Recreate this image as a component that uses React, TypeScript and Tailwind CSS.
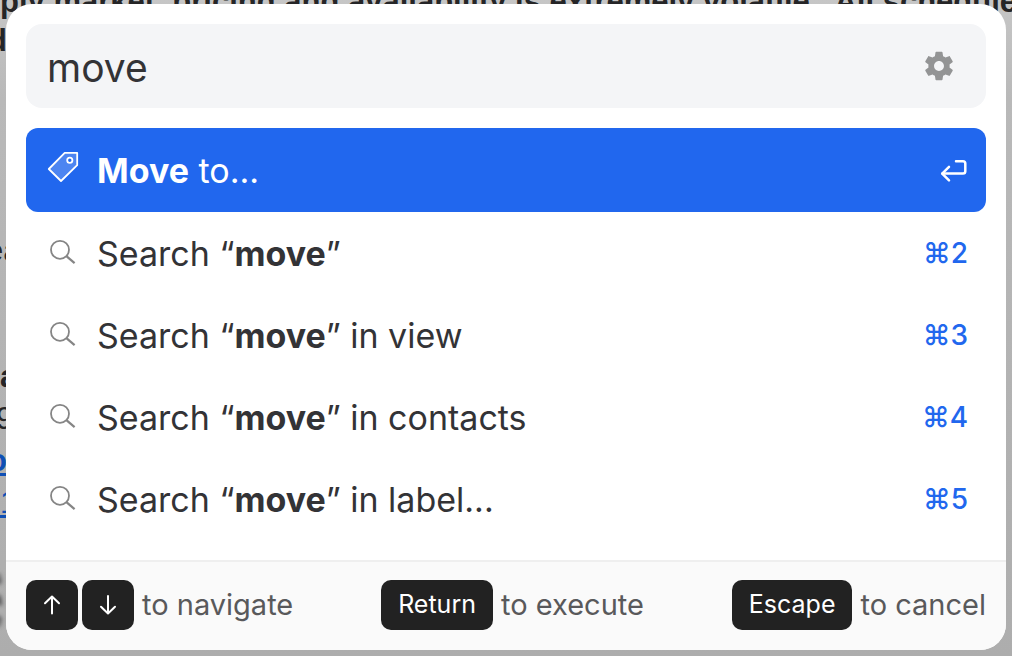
import { useState } from "react";

const FONT = "font-['Inter','Noto_Sans',sans-serif]";

const results = [
  { scope: "", key: "2" },
  { scope: " in view", key: "3" },
  { scope: " in contacts", key: "4" },
  { scope: " in label...", key: "5" },
];

function GearIcon() {
  return (
    <svg viewBox="0 0 24 24" className="size-[34px]" fill="currentColor" aria-hidden="true">
      <path d="M19.43 12.98c.04-.32.07-.64.07-.98s-.03-.66-.07-.98l2.11-1.65c.19-.15.24-.42.12-.64l-2-3.46c-.12-.22-.39-.3-.61-.22l-2.49 1c-.52-.4-1.08-.73-1.69-.98l-.38-2.65C14.46 2.18 14.25 2 14 2h-4c-.25 0-.46.18-.49.42l-.38 2.65c-.61.25-1.17.59-1.69.98l-2.49-1c-.23-.09-.49 0-.61.22l-2 3.46c-.13.22-.07.49.12.64l2.11 1.65c-.04.32-.07.65-.07.98s.03.66.07.98l-2.11 1.65c-.19.15-.24.42-.12.64l2 3.46c.12.22.39.3.61.22l2.49-1c.52.4 1.08.73 1.69.98l.38 2.65c.03.24.24.42.49.42h4c.25 0 .46-.18.49-.42l.38-2.65c.61-.25 1.17-.59 1.69-.98l2.49 1c.23.09.49 0 .61-.22l2-3.46c.12-.22.07-.49-.12-.64l-2.11-1.65zM12 15.5c-1.93 0-3.5-1.57-3.5-3.5s1.57-3.5 3.5-3.5 3.5 1.57 3.5 3.5-1.57 3.5-3.5 3.5z" />
    </svg>
  );
}

function TagIcon() {
  return (
    <svg viewBox="0 0 32 32" className="mb-1.5 size-8 shrink-0" fill="none" stroke="currentColor" aria-hidden="true">
      <path
        d="M17.7 1.9 H30.2 V14.2 L14 30 L1.8 18 Z"
        fill="#ffffff"
        fillOpacity="0.2"
        strokeWidth="1.8"
        strokeLinejoin="round"
      />
      <circle cx="22.8" cy="9.2" r="2.6" fill="#2167ee" strokeWidth="1.8" />
    </svg>
  );
}

function SearchIcon() {
  return (
    <svg viewBox="0 0 32 32" className="size-8 shrink-0 text-[#858585]" fill="none" stroke="currentColor" aria-hidden="true">
      <circle cx="13" cy="12.8" r="9" strokeWidth="1.8" />
      <path d="M19.4 19.2 L27.6 26.2" strokeWidth="2.2" />
    </svg>
  );
}

function ReturnIcon() {
  return (
    <svg
      viewBox="0 0 28 28"
      className="size-7"
      fill="none"
      stroke="currentColor"
      strokeWidth="2.5"
      strokeLinecap="round"
      strokeLinejoin="round"
      aria-hidden="true"
    >
      <path d="M16 5.2 H23 Q25.3 5.2 25.3 7.5 V15.3 Q25.3 17.6 23 17.6 H2.5" />
      <path d="M9 10.8 L2.2 17.6 L9 24.4" />
    </svg>
  );
}

function ArrowIcon({ down = false }: { down?: boolean }) {
  return (
    <svg
      viewBox="1 0 18 24"
      className="h-6 w-[18px]"
      fill="none"
      stroke="currentColor"
      strokeWidth="2"
      strokeLinecap="round"
      strokeLinejoin="round"
      aria-hidden="true"
    >
      <path d={down ? "M10 3 V20 M3 13.8 L10 20.5 L17 13.8" : "M10 20.5 V4 M3 10.2 L10 3.5 L17 10.2"} />
    </svg>
  );
}

function Key({ children }: { children: React.ReactNode }) {
  return (
    <kbd className={`${FONT} flex h-[50px] items-center justify-center rounded-[10px] bg-[#222222] px-[17px] text-[25px] text-white`}>
      {children}
    </kbd>
  );
}

function Backdrop() {
  return (
    <div
      className="absolute inset-0 overflow-hidden whitespace-pre bg-linear-to-b from-[#c6c6c6] via-[#b9b9b9] via-15% to-[#adadad] font-['Liberation_Sans',Arial,sans-serif] text-[31px] leading-[42px] text-[#252527]"
      aria-hidden="true"
    >
      <p className="-mt-4 leading-9 font-bold">ply market, pricing and availability is extremely volatile.  All schedule</p>
      <p className="-ml-3 font-bold">d</p>
      <p className="-ml-3.5 mt-[168px]">ea</p>
      <p className="mt-[84px] font-bold">a</p>
      <p className="-ml-1">9</p>
      <p className="-ml-3 font-bold text-[#0f4fb5] underline">o</p>
      <p className="text-[#0f4fb5] underline">1</p>
      <div className="-ml-2 mt-11 text-[18px] leading-[21px] font-bold blur-[2px]">
        <p>s</p>
        <p>a</p>
        <p>e</p>
      </div>
    </div>
  );
}

export default function App() {
  const [query, setQuery] = useState("move");

  return (
    <main className={`${FONT} relative min-h-screen px-1.5 pt-1 pb-1.5`}>
      <Backdrop />
      <section className="relative overflow-hidden rounded-[26px] bg-white text-[#333336]">
        <div className="p-5">
          <div className="flex h-21 items-center rounded-2xl bg-[#f4f5f7] pr-[30px] pl-[21px]">
            <input
              type="text"
              aria-label="Command"
              value={query}
              onChange={(e) => setQuery(e.target.value)}
              className="min-w-0 flex-1 bg-transparent pt-1 text-[39px] outline-none"
            />
            <button type="button" aria-label="Settings" className="text-[#939495]">
              <GearIcon />
            </button>
          </div>

          <ul className="mt-5 text-[34px]">
            <li>
              <button
                type="button"
                className="flex h-21 w-full items-center rounded-xl bg-[#2167ee] pr-[18px] pl-[21px] text-left text-white"
              >
                <TagIcon />
                <span className="ml-[18px] flex-1">
                  <b>Move</b> to...
                </span>
                <ReturnIcon />
              </button>
            </li>
            {results.map((item) => (
              <li key={item.key}>
                <button type="button" className="flex h-[82px] w-full items-center pr-[18px] pl-[21px] text-left">
                  <SearchIcon />
                  <span className="ml-[18px] flex-1">
                    Search “<b>move</b>”{item.scope}
                  </span>
                  <kbd className={`${FONT} text-[28px] font-medium text-[#2167ee]`}>⌘{item.key}</kbd>
                </button>
              </li>
            ))}
          </ul>
        </div>

        <footer className="flex items-center justify-between border-t-2 border-[#efefef] bg-[#fafafa] px-5 pt-[18px] pb-5 text-[29px] text-[#59595b]">
          <div className="flex items-center gap-1">
            <Key>
              <ArrowIcon />
            </Key>
            <Key>
              <ArrowIcon down />
            </Key>
            <span className="ml-1">to navigate</span>
          </div>
          <div className="flex items-center gap-2">
            <Key>Return</Key>
            <span>to execute</span>
          </div>
          <div className="flex items-center gap-2">
            <Key>Escape</Key>
            <span>to cancel</span>
          </div>
        </footer>
      </section>
    </main>
  );
}
